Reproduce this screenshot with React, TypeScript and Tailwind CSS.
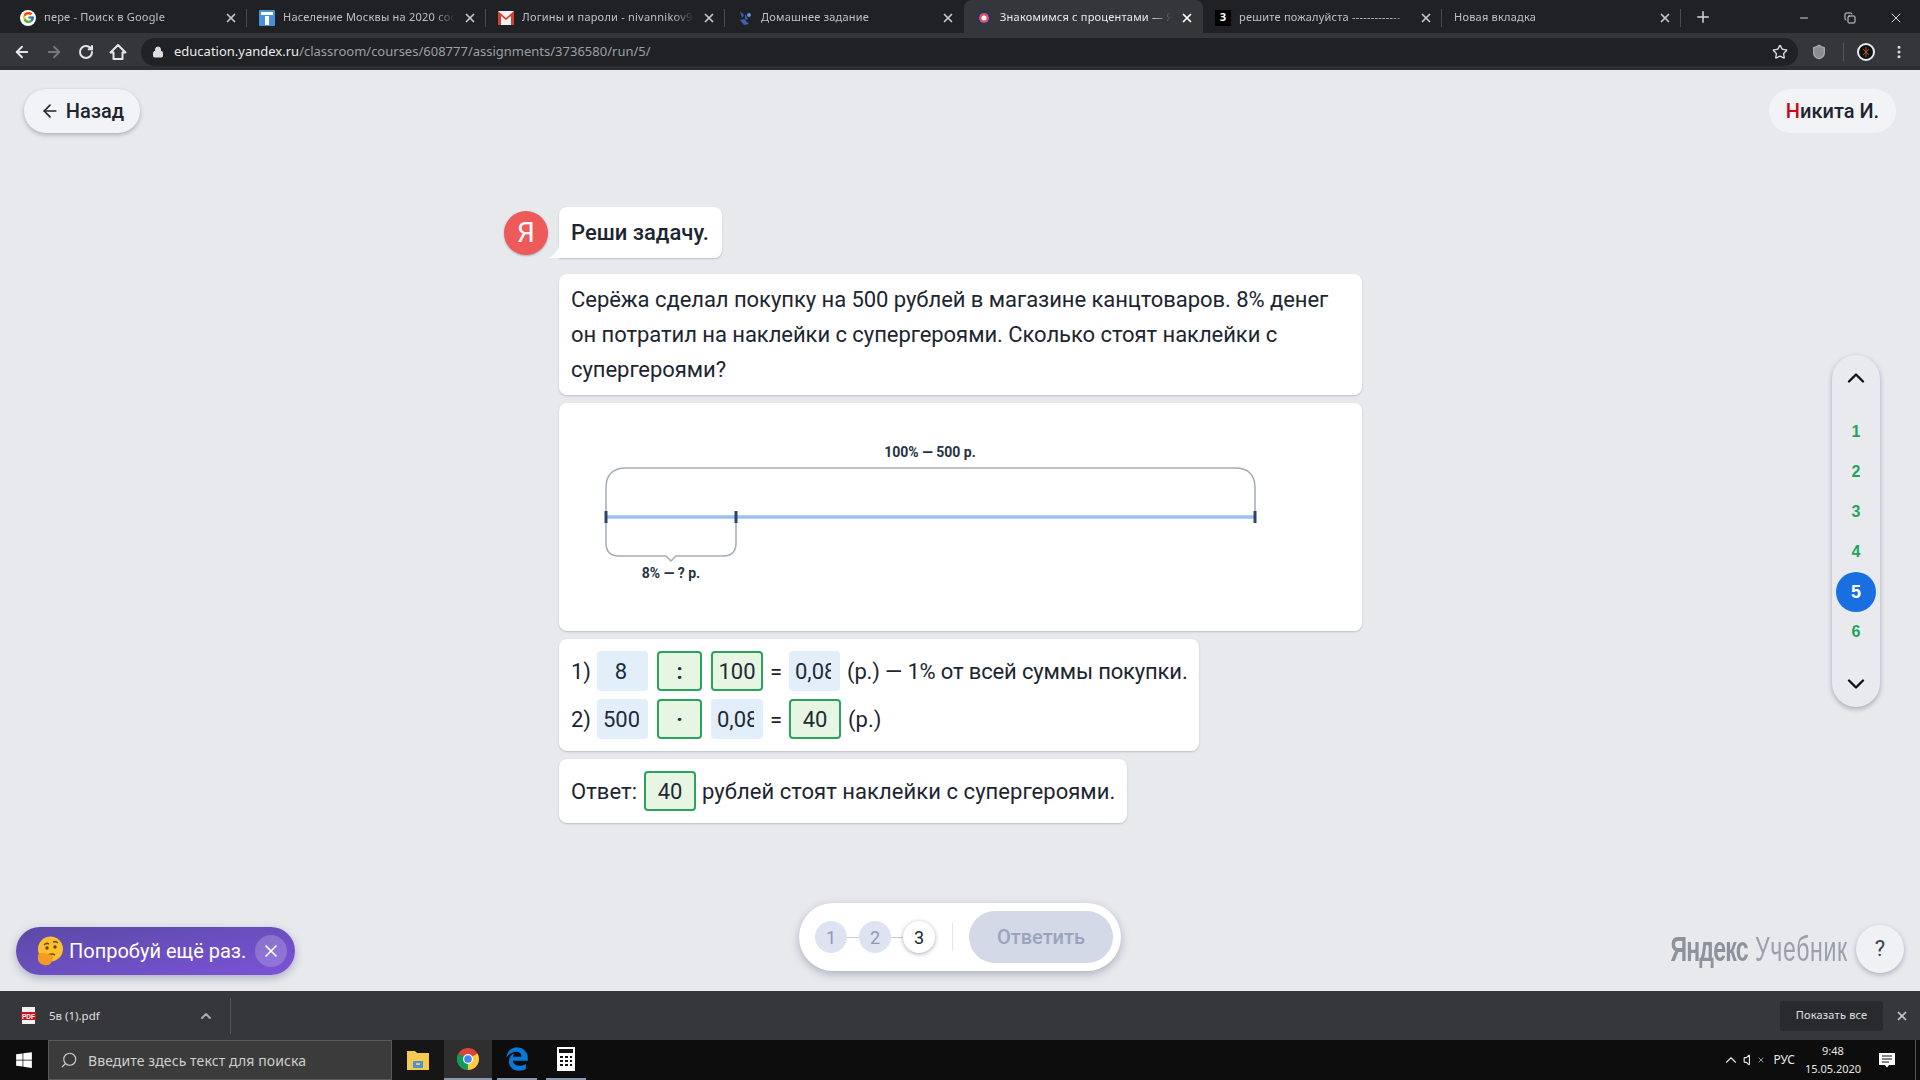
import { ArrowLeft, ArrowRight, ChevronDown, ChevronUp, Lock, Minus, Plus, RotateCw, Search, Star, Volume, X, EllipsisVertical, Copy, Shield } from "lucide-react";
import { FaWindows, FaEdgeLegacy } from "react-icons/fa6";
import { FcGoogle } from "react-icons/fc";

const GoogleIcon = () => (
  <span className="flex h-4 w-4 items-center justify-center rounded-full bg-white">
    <FcGoogle className="h-[13px] w-[13px]" />
  </span>
);

const DocIcon = () => (
  <svg width="16" height="16" viewBox="0 0 16 16">
    <rect width="16" height="16" rx="1" fill="#4a90d9" />
    <rect x="2" y="2" width="12" height="3" fill="#fff" />
    <rect x="6" y="6" width="4" height="9" fill="#fff" />
  </svg>
);

const MailIcon = () => (
  <svg width="16" height="14" viewBox="0 0 16 14">
    <rect width="16" height="14" fill="#f2f2f2" />
    <path d="M0 0l8 7 8-7v14h-3V5L8 9 3 5v9H0z" fill="#d23f31" />
  </svg>
);

const ClassIcon = () => (
  <svg width="16" height="16" viewBox="0 0 16 16">
    <path d="M3 1l4 4-2 3zM8 4l3 5-3 1zM3 10l4-1 5 5-5 1z" fill="#3f5fb5" />
    <circle cx="12" cy="5" r="2" fill="#6a8fd8" />
  </svg>
);

const YaTabIcon = () => (
  <svg width="14" height="14" viewBox="0 0 14 14">
    <circle cx="7" cy="7" r="7" fill="#24346b" />
    <circle cx="7" cy="7" r="5" fill="#e0505f" />
    <circle cx="7" cy="7" r="2.5" fill="#fff" />
  </svg>
);

const ZIcon = () => (
  <div className="flex h-4 w-4 items-center justify-center bg-black text-[11px] font-bold text-white">З</div>
);

const tabs = [
  { title: "пере - Поиск в Google", icon: <GoogleIcon />, sep: true },
  { title: "Население Москвы на 2020 сос", icon: <DocIcon />, sep: true },
  { title: "Логины и пароли - nivannikov9", icon: <MailIcon />, sep: true },
  { title: "Домашнее задание", icon: <ClassIcon /> },
  { title: "Знакомимся с процентами — Я", icon: <YaTabIcon />, active: true },
  { title: "решите пожалуйста -------------", icon: <ZIcon />, sep: true },
  { title: "Новая вкладка", sep: true },
];

const TabStrip = () => (
  <div className="flex h-[33px] items-end bg-[#202124] pl-2 font-['Noto_Sans',sans-serif] text-[11px] tracking-[0.22px] text-[#bdc1c6]">
    {tabs.map((tab) => (
      <div
        key={tab.title}
        className={`flex h-[33px] w-[239px] shrink-0 items-center gap-2 pl-3 pt-[2px] ${
          tab.active ? "rounded-t-lg bg-[#35363a] text-[#e8eaed]" : ""
        }`}
      >
        {tab.icon && <span className="flex w-4 shrink-0 justify-center">{tab.icon}</span>}
        <span className="flex-1 overflow-hidden whitespace-nowrap [mask-image:linear-gradient(to_right,black_88%,transparent)]">
          {tab.title}
        </span>
        <X className={`h-3.5 w-3.5 shrink-0 ${tab.active ? "text-white" : "text-[#c4c7ca]"}`} strokeWidth={3} />
        <span className={`h-[18px] w-px shrink-0 ${tab.sep ? "bg-[#4a4b4f]" : ""}`} />
      </div>
    ))}
    <Plus className="mb-[7px] ml-[13px] h-[18px] w-[18px] text-[#d5d7da]" />
    <div className="mb-[7px] ml-auto flex items-center pr-4 text-[#d5d7da]">
      <Minus className="h-3 w-3" />
      <Copy className="ml-[34px] h-3 w-3" />
      <X className="ml-8 h-4 w-4" strokeWidth={1.5} />
    </div>
  </div>
);

const Toolbar = () => (
  <div className="flex h-[37px] items-center border-b-4 border-[#2d2e31] bg-[#35363a] pl-[13px] pr-[13px] pt-[5px] font-['Noto_Sans',sans-serif]">
    <ArrowLeft className="h-[18px] w-[18px] text-[#e4e6e9]" strokeWidth={2.5} />
    <ArrowRight className="ml-[14px] h-[18px] w-[18px] text-[#75777b]" strokeWidth={2.5} />
    <RotateCw className="ml-[15px] h-[16px] w-[16px] text-[#e4e6e9]" strokeWidth={3} />
    <svg width="18" height="18" viewBox="0 0 18 18" className="ml-[15px]">
      <path d="M9 2L1.5 9.5H4.5V16H13.5V9.5H16.5Z" fill="none" stroke="#e4e6e9" strokeWidth="2" strokeLinejoin="round" />
    </svg>
    <div className="ml-[14px] flex h-[28px] flex-1 items-center rounded-full bg-[#202124] pl-[11px] pr-[10px] text-[13px]">
      <Lock className="h-3 w-3 text-[#dcdee1]" fill="#dcdee1" />
      <span className="ml-[10px] text-[#e8eaed]">education.yandex.ru</span>
      <span className="text-[#9aa0a6]">/classroom/courses/608777/assignments/3736580/run/5/</span>
      <Star className="ml-auto h-4 w-4 text-[#dcdee1]" />
    </div>
    <Shield className="ml-[13px] h-4 w-4 text-[#a9abae]" fill="#8a8c90" />
    <div className="ml-4 h-[18px] w-px bg-[#55565a]" />
    <svg width="18" height="18" viewBox="0 0 18 18" className="ml-[13px]">
      <circle cx="9" cy="9" r="8" fill="#111" stroke="#e8eaed" strokeWidth="2" />
      <path d="M9 4v10M6 6l6 6M12 6l-6 6" stroke="#b5562a" strokeWidth="1" />
    </svg>
    <EllipsisVertical className="ml-4 h-4 w-4 text-[#dcdee1]" strokeWidth={2.5} />
  </div>
);

const Filled = ({ value, wide }: { value: string; wide?: boolean }) => (
  <input
    readOnly
    value={value}
    className={`h-10 shrink-0 rounded-[4px] bg-[#e2effb] pl-[6px] pr-[9px] text-center text-[#1f2a37] outline-none ${wide ? "w-[52px]" : "w-[51px]"}`}
  />
);

const Answer = ({ value, narrow }: { value: string; narrow?: boolean }) => (
  <span
    className={`flex h-10 shrink-0 items-center justify-center rounded-[4px] border-2 border-[#2ba35f] bg-[#e7f6e2] text-[#1f2a37] ${
      narrow ? "w-[45px] font-bold" : "w-[52px]"
    }`}
  >
    {value}
  </span>
);

const Diagram = () => (
  <svg width="802" height="228" viewBox="0 0 802 228" className="block">
    <text x="371" y="54" textAnchor="middle" fontFamily="Roboto, sans-serif" fontSize="14" fontWeight="700" fill="#27343f">
      100% — 500 р.
    </text>
    <path d="M47 114V85q0-20 20-20h609q20 0 20 20v29" fill="none" stroke="#a4abb8" strokeWidth="1.5" />
    <path
      d="M47 114v26q0 13 13 13h47l5 5 5-5h47q13 0 13-13v-26"
      fill="none"
      stroke="#a4abb8"
      strokeWidth="1.5"
    />
    <line x1="47" y1="114" x2="696" y2="114" stroke="#9cc0f2" strokeWidth="3.5" />
    <line x1="47" y1="108" x2="47" y2="120" stroke="#2f4468" strokeWidth="3" />
    <line x1="177" y1="108" x2="177" y2="120" stroke="#2f4468" strokeWidth="3" />
    <line x1="696" y1="108" x2="696" y2="120" stroke="#2f4468" strokeWidth="3" />
    <text x="112" y="175" textAnchor="middle" fontFamily="Roboto, sans-serif" fontSize="14" fontWeight="700" fill="#27343f">
      8% — ? р.
    </text>
  </svg>
);

const ThinkingEmoji = () => (
  <svg width="28" height="30" viewBox="0 0 28 30">
    <circle cx="14.5" cy="13" r="12.5" fill="#fbc02d" />
    <path d="M8 9q2.5-2.5 5-1M17 6q3-1 5 1" stroke="#7a4a12" strokeWidth="1.6" fill="none" />
    <circle cx="11" cy="12" r="1.7" fill="#6b3f10" />
    <circle cx="19" cy="11" r="1.7" fill="#6b3f10" />
    <path d="M12 19q4-2 7 0" stroke="#7a4a12" strokeWidth="1.6" fill="none" />
    <path d="M2 19q2-3 6-2l8 2q2 1 1 3l-2 5q-2 3-7 2Q3 28 2 24z" fill="#f59a23" />
  </svg>
);

const Sidebar = () => (
  <div className="absolute right-[40px] top-[285px] flex h-[352px] w-12 flex-col items-center rounded-full bg-[#e9eaee] font-['Liberation_Sans',sans-serif] text-[16px] font-bold text-[#1ea55a] shadow-[0_2px_5px_rgba(60,70,100,0.4)]">
    <ChevronUp className="mt-[9px] h-7 w-7 text-[#111]" strokeWidth={2} />
    <div className="mt-5 flex flex-col items-center">
      {["1", "2", "3", "4", "5", "6"].map((n) =>
        n === "5" ? (
          <span key={n} className="flex h-10 w-10 items-center justify-center rounded-full bg-[#1a6fe0] text-[18px] text-white">
            {n}
          </span>
        ) : (
          <span key={n} className="flex h-10 w-10 items-center justify-center">
            {n}
          </span>
        ),
      )}
    </div>
    <ChevronDown className="mt-auto mb-[9px] h-7 w-7 text-[#111]" strokeWidth={2} />
  </div>
);

const Page = () => (
  <main className="relative flex flex-1 flex-col bg-[#e7e9ed] font-['Roboto',sans-serif] text-[22px] text-[#1c2530]">
    <div className="flex justify-between px-6 pt-[19px] text-[20px] font-medium">
      <div className="flex h-11 w-[116px] items-center justify-center gap-[6px] rounded-full bg-[#f2f3f6] shadow-[0_2px_4px_rgba(60,70,100,0.35)]">
        <ArrowLeft className="h-5 w-5" />
        Назад
      </div>
      <div className="flex h-11 w-[127px] items-center justify-center rounded-full bg-[#f2f3f6]">
        <span className="text-[#d0021b]">Н</span>икита И.
      </div>
    </div>

    <div className="ml-[559px] mt-[74px] flex w-[803px] flex-col items-start gap-2">
      <div className="relative">
        <div className="absolute left-[-55px] top-[4px] flex h-11 w-11 items-center justify-center rounded-full bg-[#ee5a5a] text-[28px] text-white shadow-[0_1px_2px_rgba(60,70,100,0.4)]">
          Я
        </div>
        <svg width="12" height="14" viewBox="0 0 12 14" className="absolute bottom-2 left-[-11px]">
          <path d="M12 0V14H0Q8 12 12 0Z" fill="#fff" />
        </svg>
        <div className="mb-2 flex h-[51px] w-[163px] items-center rounded-[8px] rounded-bl-none bg-white pl-3 font-medium shadow-[0_1px_2px_rgba(60,70,100,0.25)]">
          Реши задачу.
        </div>
      </div>
      <div className="w-full rounded-[8px] bg-white px-3 py-2 leading-[35px] tracking-[-0.05px] shadow-[0_1px_2px_rgba(60,70,100,0.25)]">
        Серёжа сделал покупку на 500 рублей в магазине канцтоваров. 8% денег он потратил на наклейки с супергероями. Сколько стоят наклейки с супергероями?
      </div>
      <div className="w-full rounded-[8px] bg-white shadow-[0_1px_2px_rgba(60,70,100,0.25)]">
        <Diagram />
      </div>
      <div className="flex w-[640px] flex-col gap-2 rounded-[8px] bg-white py-3 pl-3 shadow-[0_1px_2px_rgba(60,70,100,0.25)]">
        <div className="flex h-10 items-center whitespace-nowrap">
          <span className="w-[26px] shrink-0">1)</span>
          <Filled value="8" />
          <span className="w-[9px] shrink-0" />
          <Answer value=":" narrow />
          <span className="w-[9px] shrink-0" />
          <Answer value="100" />
          <span className="w-[26px] shrink-0 text-center">=</span>
          <Filled value="0,08" />
          <span className="ml-[7px] tracking-[-0.15px]">(р.) — 1% от всей суммы покупки.</span>
        </div>
        <div className="flex h-10 items-center whitespace-nowrap">
          <span className="w-[26px] shrink-0">2)</span>
          <Filled value="500" />
          <span className="w-[9px] shrink-0" />
          <Answer value="·" narrow />
          <span className="w-[9px] shrink-0" />
          <Filled value="0,08" wide />
          <span className="w-[26px] shrink-0 text-center">=</span>
          <Answer value="40" />
          <span className="ml-[7px]">(р.)</span>
        </div>
      </div>
      <div className="flex h-16 w-[568px] items-center whitespace-nowrap rounded-[8px] bg-white px-3 tracking-[0.05px] shadow-[0_1px_2px_rgba(60,70,100,0.25)]">
        Ответ:
        <span className="ml-[7px] mr-[6px]">
          <Answer value="40" />
        </span>
        рублей стоят наклейки с супергероями.
      </div>
    </div>

    <div className="mt-auto grid grid-cols-[1fr_auto_1fr] items-end px-4 pb-4">
      <div className="flex h-12 w-[279px] items-center rounded-full bg-gradient-to-br from-[#5a4aa6] to-[#7b53d8] pl-[20px] pr-2 text-[20px] text-white shadow-[0_3px_8px_rgba(60,70,100,0.35)]">
        <ThinkingEmoji />
        <span className="ml-[5px] whitespace-nowrap">Попробуй ещё раз.</span>
        <span className="ml-auto flex h-8 w-8 items-center justify-center rounded-full bg-white/20">
          <X className="h-5 w-5" />
        </span>
      </div>
      <div className="mb-1 flex h-[68px] w-[322px] items-center rounded-full bg-white pl-4 pr-2 shadow-[0_3px_8px_rgba(60,70,100,0.35)]">
        <span className="flex h-8 w-8 items-center justify-center rounded-full bg-[#dde3f0] text-[18px] text-[#8f9ab5]">1</span>
        <span className="h-px w-3 bg-[#c5cbd8]" />
        <span className="flex h-8 w-8 items-center justify-center rounded-full bg-[#dde3f0] text-[18px] text-[#8f9ab5]">2</span>
        <span className="h-px w-3 bg-[#c5cbd8]" />
        <span className="flex h-8 w-8 items-center justify-center rounded-full bg-white text-[18px] text-[#1c2530] shadow-[0_1px_4px_rgba(60,70,100,0.45)]">3</span>
        <span className="ml-[17px] h-7 w-px bg-[#e3e5ea]" />
        <span className="ml-[16px] flex h-[52px] w-[144px] items-center justify-center rounded-full bg-[#d4d9e7] text-[20px] font-medium text-[#9aa4bf]">
          Ответить
        </span>
      </div>
      <div className="flex items-center justify-end">
        <span className="mr-[8px] origin-right scale-x-[0.66] whitespace-nowrap font-['Liberation_Sans',sans-serif] text-[35px] tracking-[1px] text-[#9a9fa9]">
          <b className="tracking-[-1.2px] text-[#8d929c]">Яндекс</b> Учебник
        </span>
        <span className="flex h-12 w-12 shrink-0 items-center justify-center rounded-full bg-[#f0f1f5] text-[22px] text-[#3a4257] shadow-[0_2px_5px_rgba(60,70,100,0.35)]">
          ?
        </span>
      </div>
    </div>

    <Sidebar />
  </main>
);

const DownloadBar = () => (
  <div className="flex h-[49px] items-center bg-[#36373a] font-['Noto_Sans',sans-serif] text-[11.5px] text-[#dfe1e4]">
    <div className="flex h-[36px] w-[231px] items-center border-r border-[#55565a] pl-[21px]">
      <svg width="15" height="17" viewBox="0 0 15 17">
        <rect x="1" width="13" height="17" fill="#f1f1f1" />
        <rect y="5" width="15" height="8" fill="#c5161d" />
        <text x="7.5" y="11.5" textAnchor="middle" fontSize="6.5" fontWeight="700" fill="#fff" fontFamily="Liberation Sans, sans-serif">
          PDF
        </text>
      </svg>
      <span className="ml-[13px]">5в (1).pdf</span>
      <ChevronUp className="ml-[98px] h-4 w-4 text-[#a8aaad]" strokeWidth={3} />
    </div>
    <div className="ml-auto flex h-[30px] w-[103px] items-center justify-center rounded-[3px] bg-[#292a2d] text-[11px] tracking-[0.2px]">
      Показать все
    </div>
    <X className="ml-[12px] mr-[11px] h-[14px] w-[14px] text-[#c4c6c9]" strokeWidth={3} />
  </div>
);

const TaskbarApp = ({ children, active }: { children: React.ReactNode; active?: boolean }) => (
  <div className={`flex h-10 flex-col items-center ${active ? "w-12 bg-[#2f2f2f]" : "ml-px w-12"}`}>
    <div className="flex flex-1 items-center justify-center">{children}</div>
    <div className={`h-[2px] bg-[#8a98ad] ${active ? "w-12" : "w-10"}`} />
  </div>
);

const Taskbar = () => (
  <div className="flex h-10 items-center bg-[#0d0d0d] font-['Noto_Sans',sans-serif] text-[#e6e6e6]">
    <div className="flex h-10 w-12 items-center justify-center">
      <FaWindows className="h-[18px] w-[18px] text-white" />
    </div>
    <div className="flex h-10 w-[344px] items-center border border-[#5a5a5a] bg-[#3b3b3b] pl-[11px] text-[14px] tracking-[0.1px] text-[#cfcfcf]">
      <Search className="h-[18px] w-[18px] -scale-x-100" strokeWidth={1.5} />
      <span className="ml-[10px]">Введите здесь текст для поиска</span>
    </div>
    <div className="flex items-center">
      <div className="flex h-10 w-[52px] items-center justify-center bg-[#161616]">
        <svg width="22" height="22" viewBox="0 0 22 22">
          <path d="M0 2h8l2 2h12v17H0z" fill="#f6c94f" />
          <rect x="6" y="12" width="10" height="7" fill="#4a93d9" />
          <rect x="9" y="14" width="4" height="2" fill="#f6c94f" />
        </svg>
      </div>
      <TaskbarApp active>
        <svg width="24" height="24" viewBox="0 0 24 24">
          <circle cx="12" cy="12" r="11" fill="#db4437" />
          <path d="M12 12L2.5 6.5A11 11 0 0 0 12 23z" fill="#0f9d58" />
          <path d="M12 12L12 23A11 11 0 0 0 21.5 6.5z" fill="#ffcd40" />
          <circle cx="12" cy="12" r="5" fill="#fff" />
          <circle cx="12" cy="12" r="3.8" fill="#4285f4" />
        </svg>
      </TaskbarApp>
      <TaskbarApp>
        <FaEdgeLegacy className="h-6 w-6 text-[#0a78d7]" />
      </TaskbarApp>
      <TaskbarApp>
        <svg width="18" height="24" viewBox="0 0 18 24">
          <rect width="18" height="24" fill="#fff" />
          <rect x="2" y="2" width="14" height="4" fill="#111" />
          <path d="M3 9h3v2H3zM8 9h3v2H8zM13 9h2v2h-2zM3 13h3v2H3zM8 13h3v2H8zM13 13h2v2h-2zM3 17h3v2H3zM8 17h3v2H8zM13 17h2v2h-2z" fill="#111" />
        </svg>
      </TaskbarApp>
    </div>
    <div className="ml-auto flex items-center pr-[19px] text-[12px]">
      <ChevronUp className="h-[18px] w-[18px]" strokeWidth={1.5} />
      <Volume className="ml-[3px] h-[14px] w-[14px]" />
      <X className="h-2 w-2" />
      <span className="ml-[8px]">РУС</span>
      <div className="ml-[11px] flex w-[54px] flex-col items-center text-[11px] leading-[18px]">
        <span>9:48</span>
        <span className="whitespace-nowrap">15.05.2020</span>
      </div>
      <svg width="18" height="18" viewBox="0 0 18 18" className="ml-[18px]">
        <path d="M1 2H17V14H11L9 16.5 7 14H1Z" fill="#fff" />
        <path d="M4 5H14M4 8H14M4 11H11" stroke="#0d0d0d" strokeWidth="1" />
      </svg>
    </div>
    <div className="h-10 w-px bg-[#555]" />
    <div className="w-[4px]" />
  </div>
);

export default function App() {
  return (
    <div className="flex h-screen flex-col overflow-hidden">
      <TabStrip />
      <Toolbar />
      <Page />
      <DownloadBar />
      <Taskbar />
    </div>
  );
}
